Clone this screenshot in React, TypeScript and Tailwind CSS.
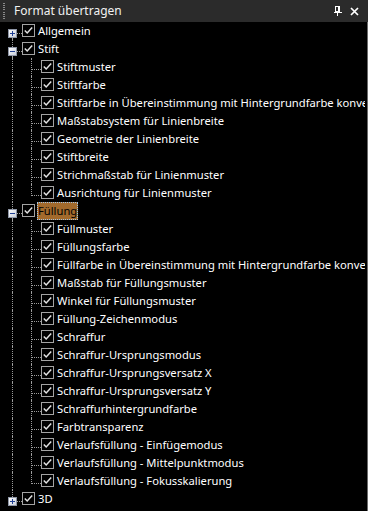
import React from "react";

type Row = {
  label: string;
  level: 0 | 1;
  expander?: "plus" | "minus";
  first?: boolean;
  last?: boolean;
  selected?: boolean;
};

const stift = [
  "Stiftmuster",
  "Stiftfarbe",
  "Stiftfarbe in Übereinstimmung mit Hintergrundfarbe konvertieren",
  "Maßstabsystem für Linienbreite",
  "Geometrie der Linienbreite",
  "Stiftbreite",
  "Strichmaßstab für Linienmuster",
  "Ausrichtung für Linienmuster",
];

const fuellung = [
  "Füllmuster",
  "Füllungsfarbe",
  "Füllfarbe in Übereinstimmung mit Hintergrundfarbe konvertieren",
  "Maßstab für Füllungsmuster",
  "Winkel für Füllungsmuster",
  "Füllung-Zeichenmodus",
  "Schraffur",
  "Schraffur-Ursprungsmodus",
  "Schraffur-Ursprungsversatz X",
  "Schraffur-Ursprungsversatz Y",
  "Schraffurhintergrundfarbe",
  "Farbtransparenz",
  "Verlaufsfüllung - Einfügemodus",
  "Verlaufsfüllung - Mittelpunktmodus",
  "Verlaufsfüllung - Fokusskalierung",
];

const rows: Row[] = [
  { label: "Allgemein", level: 0, expander: "plus", first: true },
  { label: "Stift", level: 0, expander: "minus" },
  ...stift.map((l, i) => ({ label: l, level: 1 as const, last: i === stift.length - 1 })),
  { label: "Füllung", level: 0, expander: "minus", selected: true },
  ...fuellung.map((l, i) => ({ label: l, level: 1 as const, last: i === fuellung.length - 1 })),
  { label: "3D", level: 0, expander: "plus", last: true },
];

function Checkbox() {
  return (
    <svg width="13" height="13" viewBox="0 0 13 13" className="mt-[2px] shrink-0">
      <rect x="0.5" y="0.5" width="12" height="12" fill="#000" stroke="#a3a3a3" />
      <polyline points="2.8,6.4 5.2,8.9 10.2,3.4" fill="none" stroke="#e2e2e2" strokeWidth="1.5" />
    </svg>
  );
}

function Expander({ kind }: { kind: "plus" | "minus" }) {
  return (
    <svg width="9" height="9" viewBox="0 0 9 9" className="absolute left-[8px] top-[7px]">
      <defs>
        <linearGradient id="eg" x1="0" y1="0" x2="1" y2="1">
          <stop offset="0" stopColor="#ffffff" />
          <stop offset="1" stopColor="#c6ccd8" />
        </linearGradient>
      </defs>
      <rect x="0.5" y="0.5" width="8" height="8" fill="url(#eg)" stroke="#8e96a6" />
      <rect x="2" y="4" width="5" height="1" fill="#1f3f93" />
      {kind === "plus" && <rect x="4" y="2" width="1" height="5" fill="#1f3f93" />}
    </svg>
  );
}

const dotV = "absolute left-[12px] border-l border-dotted border-[#9a9a9a]";
const dotH = "absolute top-[11px] border-t border-dotted border-[#9a9a9a]";

function TreeRow({ row }: { row: Row }) {
  return (
    <div className="flex h-[18px] items-start">
      {row.level === 1 && (
        <div className="relative h-[18px] w-[19px] shrink-0">
          <div className={`${dotV} top-0 h-[18px]`} />
        </div>
      )}
      <div className="relative h-[18px] w-[22px] shrink-0">
        {row.level === 0 ? (
          <>
            {!row.first && <div className={`${dotV} top-0 h-[7px]`} />}
            {!row.last && <div className={`${dotV} top-[16px] h-[2px]`} />}
            <div className={`${dotH} left-[17px] w-[5px]`} />
            {row.expander && <Expander kind={row.expander} />}
          </>
        ) : (
          <>
            <div className={`${dotV} top-0 ${row.last ? "h-[12px]" : "h-[18px]"}`} />
            <div className={`${dotH} left-[12px] w-[10px]`} />
          </>
        )}
      </div>
      <Checkbox />
      <span
        className={
          "ml-[2px] h-[18px] whitespace-nowrap px-[1px] text-[11.2px] leading-[17px] " +
          (row.selected
            ? "bg-[#a26a2c] text-black outline-1 outline-dotted outline-[#9ec3e6] -outline-offset-1"
            : "text-white")
        }
      >
        {row.label}
      </span>
    </div>
  );
}

export default function App() {
  return (
    <div
      className="h-[511px] w-[368px] overflow-hidden bg-black"
      style={{ fontFamily: '"Noto Sans", "Open Sans", sans-serif' }}
    >
      <div className="flex h-[22px] items-center bg-[#2b2b2b]">
        <div className="ml-[3px] flex h-[16px] w-[2px] flex-col justify-between">
          {Array.from({ length: 8 }).map((_, i) => (
            <div key={i} className="h-[1px] w-[2px] bg-[#8a8a8a]" />
          ))}
        </div>
        <span className="ml-[9px] text-[12px] text-[#f1f1f1]">Format übertragen</span>
        <div className="ml-auto mr-[9px] flex items-center gap-[8px]">
          <svg width="8" height="10" viewBox="0 0 8 10">
            <rect x="1.5" y="0.5" width="4" height="5" fill="none" stroke="#fff" />
            <rect x="4" y="1" width="1" height="5" fill="#fff" />
            <rect x="0" y="6" width="8" height="1" fill="#fff" />
            <rect x="3" y="7" width="1" height="3" fill="#fff" />
          </svg>
          <svg width="9" height="9" viewBox="0 0 9 9">
            <path d="M1 1 L8 8 M8 1 L1 8" stroke="#fff" strokeWidth="1.7" />
          </svg>
        </div>
      </div>
      <div className="h-[489px] w-[368px] overflow-hidden border-r border-[#6b6b6b]">
        <div className="w-[365px] overflow-hidden">
          {rows.map((r, i) => (
            <TreeRow key={i} row={r} />
          ))}
        </div>
      </div>
    </div>
  );
}
